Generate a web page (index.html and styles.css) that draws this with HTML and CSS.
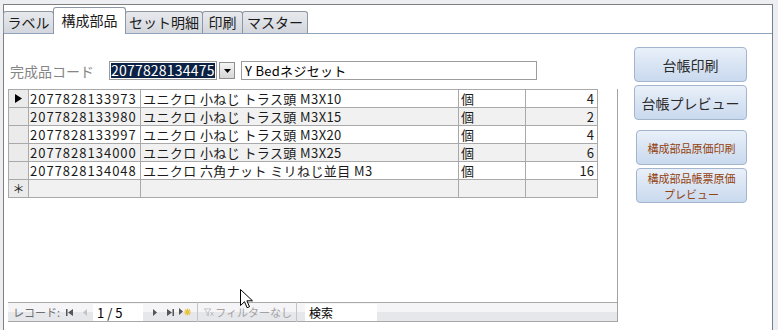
FILE: index.html
```html
<!DOCTYPE html>
<html lang="ja">
<head>
  <meta charset="UTF-8" />
  <title>構成部品</title>
  <link rel="stylesheet" href="styles.css">
</head>
<body>
  <div class="frame">
    <div class="tabs">
      <div class="tab tab-label">ラベル</div>
      <div class="tab tab-parts active">構成部品</div>
      <div class="tab tab-set">セット明細</div>
      <div class="tab tab-print">印刷</div>
      <div class="tab tab-master">マスター</div>
    </div>

    <div class="panel">
      <div class="main">
        <div class="field-row">
          <span class="field-label">完成品コード</span>
          <div class="combo">
            <span class="combo-value">2077828134475</span>
          </div>
          <span class="combo-btn">
            <svg width="7" height="4" viewBox="0 0 7 4"><path d="M0 0h7L3.5 4z" fill="#000"/></svg>
          </span>
          <div class="textbox">Y Bedネジセット</div>
        </div>

        <!-- サブフォーム -->
        <div class="subform">
          <table class="sheet">
            <colgroup>
              <col class="c-sel"><col class="c-code"><col class="c-name"><col class="c-unit"><col class="c-qty">
            </colgroup>
            <tr>
              <td class="sel"><svg width="7" height="9" viewBox="0 0 7 9"><path d="M0 0l7 4.5L0 9z" fill="#000"/></svg></td>
              <td class="code">2077828133973</td><td class="name">ユニクロ 小ねじ トラス頭 M3X10</td><td>個</td><td class="num">4</td>
            </tr>
            <tr class="alt">
              <td class="sel"></td>
              <td class="code">2077828133980</td><td class="name">ユニクロ 小ねじ トラス頭 M3X15</td><td>個</td><td class="num">2</td>
            </tr>
            <tr>
              <td class="sel"></td>
              <td class="code">2077828133997</td><td class="name">ユニクロ 小ねじ トラス頭 M3X20</td><td>個</td><td class="num">4</td>
            </tr>
            <tr class="alt">
              <td class="sel"></td>
              <td class="code">2077828134000</td><td class="name">ユニクロ 小ねじ トラス頭 M3X25</td><td>個</td><td class="num">6</td>
            </tr>
            <tr>
              <td class="sel"></td>
              <td class="code">2077828134048</td><td class="name">ユニクロ 六角ナット ミリねじ並目 M3</td><td>個</td><td class="num">16</td>
            </tr>
            <tr class="alt new-row">
              <td class="sel star">＊</td>
              <td></td><td></td><td></td><td></td>
            </tr>
          </table>
          <div class="sheet-fill"></div>
          <div class="navbar">
            <span class="nav-caption">レコード:</span>
            <span class="nav-icon first">
              <svg width="7" height="7" viewBox="0 0 7 7"><path d="M0 0h1.5v7H0zM7 0v7L2 3.5z" fill="#555"/></svg>
            </span>
            <span class="nav-icon prev">
              <svg width="4" height="7" viewBox="0 0 4 7"><path d="M4 0v7L0 3.5z" fill="#c4c4c4"/></svg>
            </span>
            <span class="nav-pos">1 / 5</span>
            <span class="nav-icon next">
              <svg width="4" height="7" viewBox="0 0 4 7"><path d="M0 0v7l4-3.5z" fill="#555"/></svg>
            </span>
            <span class="nav-icon last">
              <svg width="7" height="7" viewBox="0 0 7 7"><path d="M0 0v7l5-3.5zM5.5 0H7v7H5.5z" fill="#555"/></svg>
            </span>
            <span class="nav-icon new">
              <svg width="12" height="8" viewBox="0 0 12 8"><path d="M0 0v7l4-3.5z" fill="#555"/><path d="M8.5 0.5v7M5 4h7M6 1.5l5 5M11 1.5l-5 5" stroke="#e8c23a" stroke-width="1.2"/></svg>
            </span>
            <span class="nav-sep"></span>
            <span class="nav-filter">
              <svg width="14" height="11" viewBox="0 0 14 11"><path d="M0.5 0.5h9L6 5v5L4 9V5z" fill="none" stroke="#b0b0b0"/><path d="M9 5l4 5M13 5l-4 5" stroke="#b0b0b0"/></svg>
              <span>フィルターなし</span>
            </span>
            <span class="nav-sep"></span>
            <span class="nav-search">検索</span>
          </div>
        </div>
      </div>

      <div class="side">
        <div class="btn">台帳印刷</div>
        <div class="btn">台帳プレビュー</div>
        <div class="btn small gap-top">構成部品原価印刷</div>
        <div class="btn small two-line">
          <span>構成部品帳票原価</span>
          <span>プレビュー</span>
        </div>
      </div>
    </div>
  </div>

  <svg class="cursor" width="13" height="20" viewBox="0 0 13 20">
    <path d="M0.5 0.5v16l4-3.8 2.6 6 2.4-1-2.6-5.9h5.6z" fill="#fff" stroke="#000" stroke-width="1"/>
  </svg>
</body>
</html>
```

FILE: styles.css
```css
body {
  margin: 0;
  background: #eceef2;
  font-family: "Noto Sans CJK JP", "Noto Sans", sans-serif;
  font-size: 13px;
  color: #000;
  overflow: hidden;
}

.frame {
  margin: 4px 0 0 3px;
  width: 768px;
  height: 340px;
  border: 1px solid #7f7f7f;
  border-right-color: #6f7f8f;
  border-bottom: none;
  background: #fff;
}

/* タブ */
.tabs {
  display: flex;
  align-items: flex-end;
  height: 28px;
}

.tab {
  box-sizing: border-box;
  height: 22px;
  margin-right: -1px;
  border: 1px solid #8d97a3;
  border-bottom: none;
  border-radius: 3px 3px 0 0;
  background: linear-gradient(#e7e9ed, #d3d7dd);
  font-size: 14px;
  line-height: 20px;
  text-align: center;
  color: #1a1a1a;
}

.tab.active {
  position: relative;
  z-index: 1;
  height: 27px;
  margin-bottom: -1px;
  background: #fff;
  line-height: 25px;
}

.tab-label { width: 51px; margin-left: -1px; }
.tab-parts { width: 73px; }
.tab-set { width: 78px; }
.tab-print { width: 41px; }
.tab-master { width: 66px; }

.panel {
  display: flex;
  border-top: 1px solid #8fa4bb;
}

.main {
  padding: 27px 0 0 4px;
}

/* 完成品コード */
.field-row {
  display: flex;
  align-items: center;
  height: 19px;
}

.field-label {
  width: 99px;
  margin-left: 2px;
  font-size: 14px;
  color: #858585;
}

.combo {
  box-sizing: border-box;
  width: 108px;
  height: 19px;
  padding: 1px;
  border: 1px solid #9c9c9c;
  background: #fff;
}

.combo-value {
  display: block;
  height: 15px;
  background: #0c2245;
  color: #fff;
  font-size: 14px;
  line-height: 15px;
  letter-spacing: 0.2px;
}

.combo-btn {
  box-sizing: border-box;
  display: flex;
  align-items: center;
  justify-content: center;
  width: 16px;
  height: 17px;
  margin-left: 2px;
  border: 1px solid #8e8e8e;
  background: linear-gradient(#f4f4f4, #d6d6d6);
}

.textbox {
  box-sizing: border-box;
  width: 296px;
  height: 19px;
  margin-left: 6px;
  padding-left: 3px;
  border: 1px solid #9c9c9c;
  font-size: 13px;
  line-height: 17px;
  letter-spacing: 0.3px;
}

/* サブフォーム */
.subform {
  box-sizing: border-box;
  display: flex;
  flex-direction: column;
  width: 610px;
  height: 233px;
  margin-top: 9px;
  border-right: 1px solid #a3a3a3;
}

.sheet {
  width: 589px;
  border-collapse: collapse;
  table-layout: fixed;
}

.c-sel { width: 20px; }
.c-code { width: 112px; }
.c-name { width: 318px; }
.c-unit { width: 67px; }
.c-qty { width: 72px; }

.sheet td {
  height: 17px;
  padding: 0 0 0 2px;
  border: 1px solid #a9a9a9;
  font-size: 13px;
  line-height: 16px;
  white-space: nowrap;
  overflow: hidden;
  color: #1a1a1a;
}

.sheet td.code {
  padding-left: 1px;
  letter-spacing: 1px;
}

.sheet td.name {
  letter-spacing: 0.4px;
}

.sheet tr.alt td {
  background: #f1f1f1;
}

.sheet td.num {
  padding-right: 3px;
  text-align: right;
}

.sheet td.sel {
  padding: 0;
  background: #ebebeb;
  text-align: center;
}

.sheet tr.alt td.sel {
  background: #ebebeb;
}

.sheet td.sel svg {
  display: block;
  margin: 0 auto;
}

.sheet td.star {
  font-size: 12px;
  line-height: 16px;
}

.sheet-fill {
  flex: 1;
}

/* ナビゲーションバー */
.navbar {
  box-sizing: border-box;
  display: flex;
  align-items: center;
  height: 20px;
  border-top: 1px solid #a8a8a8;
  border-bottom: 1px solid #a8a8a8;
  background: linear-gradient(#f5f5f7 50%, #e6e7ea 50%);
  font-size: 11px;
  color: #6e6e6e;
  white-space: nowrap;
}

.nav-caption {
  margin-left: 5px;
  width: 49px;
}

.nav-icon {
  display: flex;
  align-items: center;
}

.first { width: 15px; justify-content: center; }
.prev { width: 16px; justify-content: center; }
.next { width: 15px; justify-content: center; margin-left: 4px; }
.last { width: 17px; justify-content: center; }
.new { width: 14px; }

.nav-pos {
  box-sizing: border-box;
  width: 50px;
  height: 17px;
  padding-left: 4px;
  background: #fff;
  font-size: 13px;
  line-height: 17px;
  color: #000;
}

.nav-sep {
  width: 1px;
  height: 20px;
  margin: 0 6px 0 4px;
  background: #c4c4c4;
}

.nav-filter {
  display: flex;
  align-items: center;
  gap: 1px;
  width: 88px;
  font-size: 11px;
  color: #a2a2a2;
}

.nav-search {
  box-sizing: border-box;
  width: 72px;
  height: 17px;
  padding-left: 4px;
  margin-left: 2px;
  background: #fff;
  font-size: 12px;
  line-height: 17px;
  color: #000;
}

/* ボタン */
.side {
  display: flex;
  flex-direction: column;
  gap: 3px;
  padding-top: 13px;
  margin-left: 16px;
}

.btn {
  box-sizing: border-box;
  display: flex;
  align-items: center;
  justify-content: center;
  width: 113px;
  height: 35px;
  border: 1px solid #a2b5cd;
  border-radius: 4px;
  background: linear-gradient(#e9f0f9, #c9d9ee);
  font-size: 14px;
  color: #2a2a2a;
  text-align: center;
}

.btn.small {
  width: 111px;
  margin-left: 2px;
  font-size: 11px;
  line-height: 16px;
  color: #94420f;
}

.btn.two-line {
  flex-direction: column;
}

.btn.gap-top {
  margin-top: 7px;
}

.cursor {
  position: absolute;
  left: 240px;
  top: 289px;
}
```
